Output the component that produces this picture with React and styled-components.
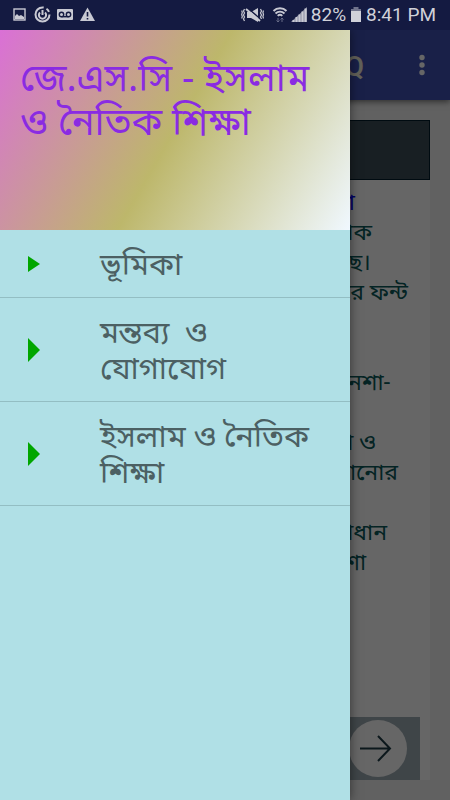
/**
 *
 * App
 *
 */

import React from "react";
import styled, { createGlobalStyle } from "styled-components";

const GlobalStyle = createGlobalStyle`
  * {
    box-sizing: border-box;
  }

  body {
    margin: 0;
    background: #f2f2f2;
    font-family: Roboto, "Noto Sans Bengali", "Noto Sans", sans-serif;
  }
`;

const Screen = styled.div`
  display: flex;
  flex-direction: column;
  min-height: 100vh;
`;

const StatusBar = styled.header`
  display: flex;
  align-items: center;
  justify-content: space-between;
  height: 30px;
  padding: 0 14px 0 12px;
  background: #141a41;
  color: #d0d1d9;
  font-size: 19px;
  line-height: 30px;
`;

const StatusGroup = styled.div`
  display: flex;
  align-items: center;
  gap: 4px;
  white-space: nowrap;
`;

const Stage = styled.div`
  position: relative;
  display: flex;
  flex: 1;
  flex-direction: column;
  overflow: hidden;
`;

const AppBar = styled.div`
  display: flex;
  align-items: center;
  height: 70px;
  padding-right: 10px;
  background: #3f51b5;
  box-shadow: 0 2px 6px rgba(0, 0, 0, 0.5);
`;

const Title = styled.h1`
  flex: 1;
  margin: 0;
  padding: 3px 40px 0 0;
  color: #f2efdc;
  font-size: 28px;
  font-weight: 500;
  line-height: 32px;
  text-align: right;
`;

const MenuButton = styled.button`
  display: flex;
  align-items: center;
  justify-content: center;
  width: 36px;
  height: 48px;
  padding: 0;
  border: none;
  background: transparent;
`;

const Card = styled.main`
  display: flex;
  flex: 1;
  flex-direction: column;
  margin: 20px;
  background: #fff;
`;

const Banner = styled.div`
  height: 60px;
  margin-bottom: 8px;
  border: 1px solid #001c2c;
  background: #3c4f58;
`;

const Line = styled.p`
  width: ${props => props.$width}px;
  height: 30px;
  margin: 0;
  color: ${props => (props.$heading ? "#0000ff" : "#0c5a5a")};
  font-size: 23px;
  line-height: 30px;
  text-align: right;
  white-space: nowrap;
`;

const Pager = styled.div`
  display: flex;
  justify-content: flex-end;
  margin: auto 10px 0;
  padding: 3px 13px 3px 0;
  background: #9fadb5;
`;

const NextButton = styled.button`
  width: 58px;
  height: 57px;
  padding: 0;
  border: none;
  border-radius: 50%;
  background: #fff;

  svg {
    display: block;
  }
`;

const Scrim = styled.div`
  position: absolute;
  inset: 0;
  background: rgba(0, 0, 0, 0.6);
`;

const Drawer = styled.aside`
  position: absolute;
  top: 0;
  bottom: 0;
  left: 0;
  width: calc(100% - 100px);
  background: #b0e0e6;
  box-shadow: 0 0 10px rgba(0, 0, 0, 0.5);
`;

const DrawerHeader = styled.div`
  height: 200px;
  padding: 24px 20px;
  background: linear-gradient(120deg, #da70d6, #bdb76b, #f0f8ff);
`;

const DrawerTitle = styled.h2`
  margin: 0;
  color: #8a2be2;
  font-family: "Noto Sans", "Noto Sans Bengali", sans-serif;
  font-size: 38px;
  font-weight: 400;
  line-height: 44px;
`;

const Menu = styled.ul`
  margin: 0;
  padding: 0;
  list-style: none;
`;

const MenuLink = styled.a`
  display: flex;
  align-items: center;
  gap: 60px;
  padding: 17px 28px 14px;
  border-bottom: 1px solid #93bec3;
  color: #4c6063;
  font-size: 31px;
  line-height: 36px;
  text-decoration: none;
  white-space: pre-wrap;
`;

const Arrow = styled.svg`
  flex: none;
  width: 12px;
  height: ${props => (props.$tall ? 24 : 16)}px;
  margin-bottom: 3px;
`;

const items = [
  { text: "ভূমিকা" },
  { text: "মন্তব্য  ও যোগাযোগ", tall: true },
  { text: "ইসলাম ও নৈতিক শিক্ষা", tall: true },
];

const lines = [
  { text: "শনা", width: 335, heading: true },
  { text: "নাক", width: 352 },
  { text: "য়েছে।", width: 351 },
  { text: "লার ফন্ট", width: 388 },
  {},
  {},
  { text: "নশা-", width: 370 },
  {},
  { text: "ষা ও", width: 356 },
  { text: "জানোর", width: 378 },
  {},
  { text: "রাধান", width: 367 },
  { text: "শা", width: 346 },
];

function NotificationIcons() {
  return (
    <svg width="84" height="18" viewBox="0 0 84 18" fill="none" stroke="#c8c9d3">
      <rect x="2" y="3" width="11" height="11" strokeWidth="1.4" />
      <path d="M3 13V10l2-2 2 2 2-1 3 2v2z" fill="#c8c9d3" stroke="none" />
      <circle cx="30.500" cy="8.500" r="7" strokeWidth="2" strokeDasharray="34 3 4 3" />
      <path d="M28 6.500a3.600 3.600 0 1 0 5 0M30.500 4v5" strokeWidth="2" />
      <rect x="45" y="3" width="16" height="11" rx="1" fill="#c8c9d3" stroke="none" />
      <g stroke="#141a41" strokeWidth="1.400">
        <circle cx="49.500" cy="8.500" r="2.200" />
        <circle cx="56.500" cy="8.500" r="2.200" />
        <path d="M49.500 10.700h7" />
      </g>
      <path d="M75.500 1.500L83 15H68z" fill="#c8c9d3" stroke="none" />
      <path d="M75.500 6v4.500M75.500 12v1.500" stroke="#141a41" strokeWidth="1.600" />
    </svg>
  );
}

function SignalIcons() {
  return (
    <svg width="66" height="18" viewBox="0 0 66 18" fill="none" stroke="#c8c9d3">
      <path d="M6 6h4l7-4v14l-7-4H6z" fill="#c8c9d3" stroke="none" />
      <path d="M6 1.500l14 12" stroke="#141a41" strokeWidth="1.500" />
      <path d="M5 3l14 12" strokeWidth="2" />
      <path d="M3.500 3l-1 2 1 2-1 2 1 2-1 2 1 2M.7 4.500l.6 2-.6 2 .6 2-.6 2M19.500 3l1 2-1 2 1 2-1 2 1 2M22.500 4.500l-.6 2 .6 2-.6 2 .6 2" strokeWidth="1.200" />
      <path d="M32.500 5a9 9 0 0 1 13 0M34.500 7.500a6.400 6.400 0 0 1 9 0M36.700 9.900a3.400 3.400 0 0 1 4.600 0" strokeWidth="1.900" />
      <path d="M37 12v4M35.500 14.500L37 16l1.500-1.500M41 16v-4M39.500 13.500L41 12l1.500 1.500" stroke="#676b87" />
      <path d="M50 16L66 1v15z" fill="#8a8da3" stroke="none" />
      <path d="M52.500 14v2M55.500 11V16M58.500 8.500V16M61.500 5.500V16M64.500 2.500V16" strokeWidth="2" />
    </svg>
  );
}

function BatteryIcon() {
  return (
    <svg width="12" height="16" viewBox="0 0 12 16">
      <path d="M3.500 0h5v2H11v3H1V2h2.500z" fill="#70748c" />
      <path d="M1 4h10v11H1z" fill="#d0d1d9" />
    </svg>
  );
}

function MenuItem({ text, tall }) {
  return (
    <li>
      <MenuLink href="#">
        <Arrow $tall={tall} viewBox="0 0 12 16" preserveAspectRatio="none" aria-hidden="true">
          <path d="M0 0L12 8L0 16z" fill="#00a600" />
        </Arrow>
        <span>{text}</span>
      </MenuLink>
    </li>
  );
}

function App() {
  return (
    <Screen>
      <GlobalStyle />
      <StatusBar>
        <NotificationIcons />
        <StatusGroup>
          <SignalIcons />
          <span>82%</span>
          <BatteryIcon />
          <span>8:41 PM</span>
        </StatusGroup>
      </StatusBar>
      <Stage>
        <AppBar>
          <Title>MCQ</Title>
          <MenuButton aria-label="More options">
            <svg width="6" height="22" viewBox="0 0 6 22" fill="#fff">
              <circle cx="3" cy="3.500" r="2.700" />
              <circle cx="3" cy="11" r="2.700" />
              <circle cx="3" cy="18.500" r="2.700" />
            </svg>
          </MenuButton>
        </AppBar>
        <Card>
          <Banner />
          {lines.map((line, index) => (
            <Line key={index} $width={line.width} $heading={line.heading}>
              {line.text}
            </Line>
          ))}
          <Pager>
            <NextButton aria-label="Next">
              <svg width="58" height="57" viewBox="0 0 58 57" fill="none" stroke="#203c48" strokeWidth="2">
                <path d="M11 28.500h30M29 16l12 12.500L29 41" />
              </svg>
            </NextButton>
          </Pager>
        </Card>
        <Scrim />
        <Drawer>
          <DrawerHeader>
            <DrawerTitle>জে.এস.সি - ইসলাম ও নৈতিক শিক্ষা</DrawerTitle>
          </DrawerHeader>
          <Menu>
            {items.map(item => (
              <MenuItem key={item.text} text={item.text} tall={item.tall} />
            ))}
          </Menu>
        </Drawer>
      </Stage>
    </Screen>
  );
}

export default App;
